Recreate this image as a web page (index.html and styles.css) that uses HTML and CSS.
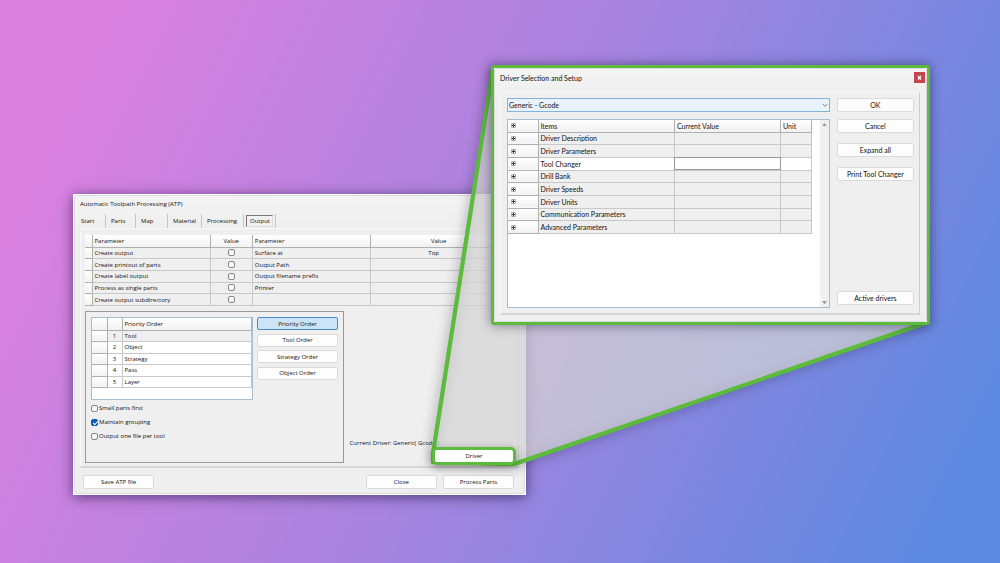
FILE: index.html
```html
<!DOCTYPE html>
<html lang="en">
<head>
    <meta charset="UTF-8">
    <meta name="viewport" content="width=device-width, initial-scale=1.0">
    <title>Driver Selection and Setup</title>
    <link rel="stylesheet" href="styles.css">
</head>
<body>
<main class="stage">

    <section class="window atp" aria-label="Automatic Toolpath Processing">
        <div class="frame">
            <h1 class="title">Automatic Toolpath Processing (ATP)</h1>
            <nav class="tabs">
                <button type="button">Start</button>
                <button type="button">Parts</button>
                <button type="button">Map</button>
                <button type="button">Material</button>
                <button type="button">Processing</button>
                <button type="button" class="active"><span>Output</span></button>
            </nav>

            <div class="panel">
                <table class="params">
                    <colgroup><col class="c-head"><col class="c-name"><col class="c-check"><col class="c-name"><col></colgroup>
                    <thead>
                        <tr><th></th><th>Parameter</th><th class="mid">Value</th><th>Parameter</th><th class="mid">Value</th></tr>
                    </thead>
                    <tbody>
                        <tr><th></th><td>Create output</td><td class="mid"><input type="checkbox" aria-label="Create output"></td><td>Surface at</td><td class="mid top">Top</td></tr>
                        <tr><th></th><td>Create printout of parts</td><td class="mid"><input type="checkbox" aria-label="Create printout of parts"></td><td>Output Path</td><td></td></tr>
                        <tr><th></th><td>Create label output</td><td class="mid"><input type="checkbox" aria-label="Create label output"></td><td>Output filename prefix</td><td></td></tr>
                        <tr><th></th><td>Process as single parts</td><td class="mid"><input type="checkbox" aria-label="Process as single parts"></td><td>Printer</td><td></td></tr>
                        <tr><th></th><td>Create output subdirectory</td><td class="mid"><input type="checkbox" aria-label="Create output subdirectory"></td><td></td><td></td></tr>
                    </tbody>
                </table>

                <div class="lower">
                    <div class="group">
                        <div class="order">
                            <div class="order-list">
                                <table>
                                    <colgroup><col class="c-row"><col class="c-num"><col></colgroup>
                                    <thead><tr><th></th><th></th><th>Priority Order</th></tr></thead>
                                    <tbody>
                                        <tr class="selected"><th></th><td class="mid">1</td><td>Tool</td></tr>
                                        <tr><th></th><td class="mid">2</td><td>Object</td></tr>
                                        <tr><th></th><td class="mid">3</td><td>Strategy</td></tr>
                                        <tr><th></th><td class="mid">4</td><td>Pass</td></tr>
                                        <tr><th></th><td class="mid">5</td><td>Layer</td></tr>
                                    </tbody>
                                </table>
                            </div>
                            <div class="order-buttons">
                                <button type="button" class="btn pressed">Priority Order</button>
                                <button type="button" class="btn">Tool Order</button>
                                <button type="button" class="btn">Strategy Order</button>
                                <button type="button" class="btn">Object Order</button>
                            </div>
                        </div>
                        <div class="options">
                            <label><input type="checkbox"> Small parts first</label>
                            <label><input type="checkbox" checked> Maintain grouping</label>
                            <label><input type="checkbox"> Output one file per tool</label>
                        </div>
                    </div>
                    <div class="driver">
                        <p>Current Driver: Generic( Gcode )</p>
                        <button type="button" class="driver-btn">Driver</button>
                    </div>
                </div>
            </div>

            <footer class="actions">
                <button type="button" class="btn save">Save ATP file</button>
                <button type="button" class="btn">Close</button>
                <button type="button" class="btn">Process Parts</button>
            </footer>
        </div>
    </section>

    <!-- callout from the Driver button to the driver window -->
    <svg class="callout" viewBox="0 0 1000 563" preserveAspectRatio="none" aria-hidden="true">
        <path class="shadow" d="M493 68L433 454V462L514 464L928 322"/>
        <polygon points="493,68 433,462 514,464 928,322 928,68"/>
        <path d="M493 68L433 454V462L514 464L928 322"/>
    </svg>

    <section class="window setup" aria-label="Driver Selection and Setup">
        <div class="frame">
            <header class="setup-head">
                <h2 class="title">Driver Selection and Setup</h2>
                <button type="button" class="close" aria-label="Close window">
                    <svg viewBox="0 0 11 11"><path d="M4 4L7 7.500M7 4L4 7.500" stroke="#fff" stroke-width="1.300"/></svg>
                </button>
            </header>
            <div class="panel setup-panel">
                <div class="setup-main">
                    <div class="combo">
                        <select aria-label="Driver"><option>Generic - Gcode</option></select>
                        <svg viewBox="0 0 7 5"><path d="M1 1L3.500 4L6 1" fill="none" stroke="#777"/></svg>
                    </div>
                    <div class="items">
                        <div class="items-body">
                            <table>
                                <colgroup><col class="c-plus"><col class="c-item"><col class="c-current"><col></colgroup>
                                <thead>
                                    <tr><th><button type="button" class="plus" aria-label="Expand Items"></button></th><th>Items</th><th>Current Value</th><th>Unit</th></tr>
                                </thead>
                                <tbody>
                                    <tr><th><button type="button" class="plus" aria-label="Expand"></button></th><td>Driver Description</td><td></td><td></td></tr>
                                    <tr><th><button type="button" class="plus" aria-label="Expand"></button></th><td>Driver Parameters</td><td></td><td></td></tr>
                                    <tr class="current"><th><button type="button" class="plus" aria-label="Expand"></button></th><td>Tool Changer</td><td class="focus"></td><td></td></tr>
                                    <tr><th><button type="button" class="plus" aria-label="Expand"></button></th><td>Drill Bank</td><td></td><td></td></tr>
                                    <tr><th><button type="button" class="plus" aria-label="Expand"></button></th><td>Driver Speeds</td><td></td><td></td></tr>
                                    <tr><th><button type="button" class="plus" aria-label="Expand"></button></th><td>Driver Units</td><td></td><td></td></tr>
                                    <tr><th><button type="button" class="plus" aria-label="Expand"></button></th><td>Communication Parameters</td><td></td><td></td></tr>
                                    <tr><th><button type="button" class="plus" aria-label="Expand"></button></th><td>Advanced Parameters</td><td></td><td></td></tr>
                                </tbody>
                            </table>
                        </div>
                        <div class="scroll">
                            <svg viewBox="0 0 6 4"><path d="M3 0L6 4H0Z" fill="#999"/></svg>
                            <svg viewBox="0 0 6 4"><path d="M0 0H6L3 4Z" fill="#999"/></svg>
                        </div>
                    </div>
                </div>
                <div class="side">
                    <button type="button" class="btn">OK</button>
                    <button type="button" class="btn">Cancel</button>
                    <button type="button" class="btn spaced">Expand all</button>
                    <button type="button" class="btn spaced">Print Tool Changer</button>
                    <button type="button" class="btn last">Active drivers</button>
                </div>
            </div>
        </div>
    </section>

</main>
</body>
</html>
```
FILE: styles.css
```css
* {
    box-sizing: border-box;
}
body {
    margin: 0;
    font-family: "Open Sans", "Noto Sans", sans-serif;
    font-size: 6px;
    line-height: 8px;
    color: #111;
}
button, input, select {
    font: inherit;
    color: inherit;
    margin: 0;
    padding: 0;
}
h1, h2, p {
    margin: 0;
    font-size: inherit;
    font-weight: normal;
}
.stage {
    position: relative;
    min-height: 100vh;
    overflow: hidden;
    background: linear-gradient(116deg, #db80df 8%, #a684df 50%, #5e89e0 93%);
}

/* windows */
.window {
    position: absolute;
    background: #fff;
}
.atp {
    left: 7.3%;
    top: 194px;
    width: 45.3%;
    padding: 1px;
    box-shadow: 0 2px 12px rgba(20, 10, 50, 0.6);
}
.setup {
    left: 49.1%;
    top: 65px;
    width: 43.9%;
    z-index: 3;
    border: 3px solid #5cba3c;
    border-radius: 3px;
    font-family: Lato, "Open Sans", sans-serif;
    font-size: 7px;
    box-shadow: 0 0 12px rgba(20, 10, 50, 0.5);
}
.frame {
    background: linear-gradient(#f3f3f3, #efefef 30px);
    border: 1px solid #dcdcdc;
    border-radius: 3px;
    padding: 4px 5px;
}
.setup .frame {
    padding: 3px 6px 6px 5px;
}
.panel {
    border: 1px solid #f8f8f8;
    border-right-color: #ccc;
    border-bottom: 2px solid #d6d6d6;
    padding: 5px 2px 3px 4px;
}

/* tabs */
.tabs {
    display: grid;
    grid-template-columns: 26px 30px 32px 34px 42px 32px;
    height: 14px;
    margin-top: 6px;
}
.tabs button {
    border: 0;
    border-right: 1px solid #c4c4c4;
    background: none;
    padding: 0 5px;
    text-align: left;
}
.tabs button:first-child {
    padding-left: 1px;
}
.tabs .active {
    padding: 0 2px;
}
.active span {
    display: block;
    border: 1px solid #ddd;
    border-top-color: #777;
    border-left-color: #777;
    padding: 1px 3px;
}

/* tables */
table {
    width: 100%;
    table-layout: fixed;
    border-collapse: collapse;
}
th, td {
    padding: 0 2px;
    border-right: 1px solid #c8c8c8;
    border-bottom: 1px solid #c8c8c8;
    text-align: left;
    font-weight: normal;
    white-space: nowrap;
}
th {
    background: linear-gradient(#fff, #f1f1f1);
    border-color: #b0b0b0;
}
thead th {
    height: 12px;
}
.mid {
    text-align: center;
}
.params {
    width: 98%;
    height: 71px;
    margin-top: 1px;
}
.c-head { width: 7px; }
.c-name { width: 28%; }
.c-check { width: 10%; }
.params .top {
    padding-right: 12px;
}
input[type="checkbox"] {
    appearance: none;
    display: inline-block;
    width: 7px;
    height: 7px;
    border: 1px solid #888;
    border-radius: 2px;
    background: #f7f7f7;
    vertical-align: middle;
}
td input[type="checkbox"] {
    display: block;
    margin: 0 auto;
}
input[type="checkbox"]:checked {
    background: #0a5cb8;
    border-color: #0a5cb8;
}
input[type="checkbox"]:checked::before {
    content: "";
    display: block;
    width: 4px;
    height: 2px;
    border-left: 1px solid #fff;
    border-bottom: 1px solid #fff;
    margin: 1px 0 0 1px;
    transform: rotate(-45deg);
}

/* buttons */
.btn {
    height: 14px;
    border: 1px solid #dadada;
    border-radius: 2px;
    background: #fdfdfd;
}
.pressed {
    background: #cce4f7;
    border-color: #4a8ac8;
}

/* priority group */
.lower {
    display: flex;
    margin-top: 5px;
}
.group {
    flex: 0 0 60%;
    height: 152px;
    border: 1px solid #999;
    padding: 5px;
}
.order {
    display: flex;
    gap: 4px;
}
.order-list {
    flex: 2;
    height: 83px;
    border: 1px solid #a8bccc;
    background: #fff;
}
.order-list table {
    height: 70px;
}
.c-row { width: 15px; }
.c-num { width: 15px; }
.selected td {
    background: #efefef;
}
.order-buttons {
    flex: 1;
    display: flex;
    flex-direction: column;
    justify-content: space-between;
    height: 63px;
}
.order-buttons .btn {
    height: 13px;
}
.options {
    display: grid;
    gap: 4px;
    margin-top: 3px;
}
.options label {
    display: flex;
    align-items: center;
    gap: 1px;
    height: 10px;
}
.driver {
    flex: 1;
    display: flex;
    flex-direction: column;
    justify-content: flex-end;
    padding-left: 6px;
}
.driver-btn {
    position: relative;
    z-index: 4;
    align-self: flex-end;
    width: 84px;
    height: 18px;
    margin-bottom: -2px;
    border: 3px solid #5cba3c;
    border-radius: 5px;
    background: #fff;
    box-shadow: 0 2px 8px rgba(0, 0, 0, 0.3);
}
.actions {
    display: flex;
    gap: 6px;
    padding: 7px 5px 0 3px;
}
.actions .btn {
    width: 16.5%;
}
.actions .save {
    margin-right: auto;
}

/* callout */
.callout {
    position: absolute;
    inset: 0;
    width: 100%;
    height: 100%;
    z-index: 2;
}
.callout polygon {
    fill: #d4d4d4;
    fill-opacity: 0.72;
}
.callout path {
    fill: none;
    stroke: #5cba3c;
    stroke-width: 4;
    stroke-linejoin: round;
}
.callout .shadow {
    filter: drop-shadow(0 0 6px rgba(30, 20, 50, 0.6));
}

/* driver setup window */
.setup-head {
    display: flex;
    justify-content: space-between;
    align-items: center;
    margin-right: -5px;
    height: 11px;
}
.close {
    width: 11px;
    height: 11px;
    border: 0;
    background: #c4454b;
}
.close svg {
    display: block;
}
.setup-panel {
    display: flex;
    gap: 7px;
    margin-top: 9px;
    padding: 5px 5px 5px 6px;
}
.setup-main {
    flex: 1;
}
.combo {
    display: grid;
    align-items: center;
}
.combo select, .combo svg {
    grid-area: 1 / 1;
}
.combo select {
    appearance: none;
    height: 14px;
    padding: 0 1px;
    border: 1px solid #84b2d8;
    border-radius: 0;
    background: #e9f3fb;
}
.combo svg {
    width: 6px;
    justify-self: end;
    margin-right: 2px;
    pointer-events: none;
}
.items {
    display: flex;
    height: 189px;
    margin-top: 7px;
    border: 1px solid #a8bccc;
    background: #fff;
}
.items-body {
    flex: 1;
    padding-right: 8px;
}
.items table {
    height: 114px;
}
.items td {
    background: #efefef;
}
.items .current td {
    background: #fff;
}
.items .focus {
    outline: 1px solid #999;
    outline-offset: -1px;
}
.c-plus { width: 30px; }
.c-item { width: 45%; }
.c-current { width: 35%; }
.plus {
    display: block;
    width: 5px;
    height: 5px;
    margin-left: 1px;
    border: 1px solid #9ab;
    border-radius: 1px;
    background:
        linear-gradient(#333, #333) center / 3px 1px no-repeat,
        linear-gradient(#333, #333) center / 1px 3px no-repeat,
        #fff;
}
.scroll {
    display: flex;
    flex-direction: column;
    justify-content: space-between;
    align-items: center;
    width: 9px;
    padding: 3px 0;
    background: #f0f0f0;
}
.scroll svg {
    width: 5px;
}
.side {
    display: flex;
    flex-direction: column;
    gap: 7px;
    width: 19%;
}
.side .spaced {
    margin-top: 3px;
}
.side .last {
    margin-top: auto;
    margin-bottom: 3px;
}
```
